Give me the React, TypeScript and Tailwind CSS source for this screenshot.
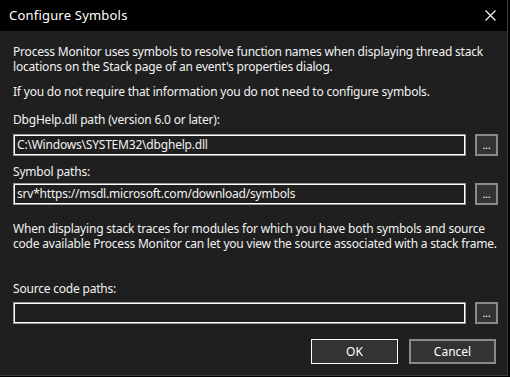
import React from "react";

const font = { fontFamily: '"Noto Sans", "Open Sans", sans-serif' };

function TextBox({ value }: { value: string }) {
  return (
    <div className="h-[22px] w-[453px] border border-[#9a9a9a] bg-[#1f1f1f]">
      <div className="h-full w-full border border-white pl-[2px] leading-[18px] text-[12px] tracking-[-0.2px] text-[#f2f2f2] whitespace-nowrap overflow-hidden">
        {value}
      </div>
    </div>
  );
}

function DotsButton() {
  return (
    <div className="ml-[9px] flex h-[22px] w-[23px] items-center justify-center border-2 border-[#8a8a8a] bg-[#333333] text-[11px] leading-none text-white">
      <span className="-mt-[2px]">...</span>
    </div>
  );
}

export default function App() {
  return (
    <div className="h-[377px] w-[510px] bg-black" style={font}>
      <div className="flex h-[376px] w-[508px] flex-col border-r border-b border-[#3c3c3c]">
        <div className="flex h-[31px] shrink-0 items-center justify-between bg-black pl-[9px] pr-[11px]">
          <span className="text-[13px] leading-[15px] tracking-[0.2px] text-white">Configure Symbols</span>
          <svg width="11" height="11" viewBox="0 0 11 11" className="mt-[-1px]">
            <path d="M0.5 0.5 L10.5 10.5 M10.5 0.5 L0.5 10.5" stroke="#ffffff" strokeWidth="1.1" fill="none" />
          </svg>
        </div>
        <div className="flex flex-1 flex-col bg-[#1f1f1f] pl-[13px] pt-[13px] text-[12px] leading-[15px] tracking-[-0.2px] text-[#f2f2f2] whitespace-nowrap">
          <p className="h-[15px]">Process Monitor uses symbols to resolve function names when displaying thread stack</p>
          <p className="h-[15px]">locations on the Stack page of an event's properties dialog.</p>
          <p className="mt-[10px] h-[15px]">If you do not require that information you do not need to configure symbols.</p>
          <p className="mt-[13px] h-[15px]">DbgHelp.dll path (version 6.0 or later):</p>
          <div className="mt-[7px] flex">
            <TextBox value="C:\Windows\SYSTEM32\dbghelp.dll" />
            <DotsButton />
          </div>
          <p className="mt-[8px] h-[15px]">Symbol paths:</p>
          <div className="mt-[4px] flex">
            <TextBox value="srv*https://msdl.microsoft.com/download/symbols" />
            <DotsButton />
          </div>
          <p className="mt-[16px] h-[15px]">When displaying stack traces for modules for which you have both symbols and source</p>
          <p className="h-[15px]">code available Process Monitor can let you view the source associated with a stack frame.</p>
          <p className="mt-[30px] h-[15px]">Source code paths:</p>
          <div className="mt-[6px] flex">
            <TextBox value="" />
            <DotsButton />
          </div>
          <div className="mt-[15px] flex justify-end pr-[11px] tracking-normal">
            <div className="flex h-[25px] w-[87px] items-center justify-center border border-white bg-[#333333] text-[12px] text-white">
              OK
            </div>
            <div className="ml-[11px] flex h-[25px] w-[87px] items-center justify-center border-2 border-[#8a8a8a] bg-[#333333] text-[12px] text-white">
              Cancel
            </div>
          </div>
        </div>
      </div>
    </div>
  );
}
